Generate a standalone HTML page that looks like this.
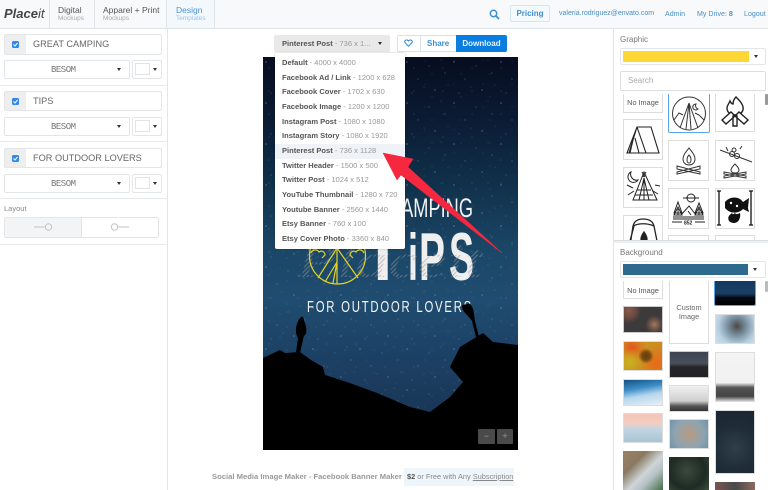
<!DOCTYPE html>
<html><head><meta charset="utf-8"><style>
*{box-sizing:border-box}
html,body{margin:0;padding:0;width:768px;height:490px;overflow:hidden;background:#fff;font-family:"Liberation Sans",sans-serif}
#r{position:relative;width:768px;height:490px;overflow:hidden;filter:blur(.35px)}
.a{position:absolute}
.t{position:absolute;white-space:nowrap}
.thumb{position:absolute;border:1px solid #ddd;background:#fff}
.opt{position:absolute;left:0;width:130px;height:14.65px;line-height:14.65px;padding-left:7px;font-size:7.55px;color:#999;white-space:nowrap}
.opt b{color:#555}
.box{position:absolute;border:1px solid #e3e6e8;border-radius:2px;background:#fff}
.font{font-family:"Liberation Mono",monospace;font-size:9px;color:#777;letter-spacing:-.5px}
.car{position:absolute;width:0;height:0;border-left:2.5px solid transparent;border-right:2.5px solid transparent;border-top:3px solid #333}
svg{display:block}
.ck{position:absolute;left:12px;width:7px;height:7px;background:#2f8ae8;border-radius:1.5px}
</style></head><body><div id="r">

<!-- header -->
<div class="a" style="left:0;top:0;width:768px;height:29px;background:#f7f9fa;border-bottom:1px solid #dfe4e8"></div>
<div class="a" style="left:167px;top:0;width:47px;height:28px;background:#f3f8fc"></div>
<div class="a" style="left:49px;top:0;width:1px;height:28px;background:#e1e5e8"></div>
<div class="a" style="left:94px;top:0;width:1px;height:28px;background:#e1e5e8"></div>
<div class="a" style="left:166px;top:0;width:1px;height:28px;background:#e1e5e8"></div>
<div class="a" style="left:214px;top:0;width:1px;height:28px;background:#e1e5e8"></div>
<div class="t" style="left:4px;top:6px;font-size:13px;line-height:16px;font-style:italic;color:#444"><b>Place</b><span style="font-weight:400">it</span></div>
<div class="t" style="left:58px;top:5px;font-size:8.5px;line-height:11px;color:#555">Digital</div>
<div class="t" style="left:58px;top:15px;font-size:6.5px;line-height:8px;color:#aaa">Mockups</div>
<div class="t" style="left:103px;top:5px;font-size:8.5px;line-height:11px;color:#555">Apparel + Print</div>
<div class="t" style="left:103px;top:15px;font-size:6.5px;line-height:8px;color:#aaa">Mockups</div>
<div class="t" style="left:176px;top:5px;font-size:8.5px;line-height:11px;color:#4a90d9">Design</div>
<div class="t" style="left:176px;top:15px;font-size:6.5px;line-height:8px;color:#9cc4e8">Templates</div>
<svg class="a" style="left:489px;top:9px" width="11" height="11" viewBox="0 0 11 11"><circle cx="4.500" cy="4.500" r="3.200" fill="none" stroke="#3d8fd0" stroke-width="1.500"/><path d="M7 7l3 3" stroke="#3d8fd0" stroke-width="1.700"/></svg>
<div class="a" style="left:510px;top:5px;width:40px;height:17px;border:1px solid #d5e6f3;border-radius:2px;background:#f4f9fc;text-align:center;font-size:8px;line-height:15px;font-weight:bold;color:#3f8fd2">Pricing</div>
<div class="t" style="left:559px;top:9px;font-size:7px;line-height:10px;color:#4a8fc7">valeria.rodriguez@envato.com</div>
<div class="t" style="left:665px;top:9px;font-size:7.100px;line-height:10px;color:#4a8fc7">Admin</div>
<div class="t" style="left:697px;top:9px;font-size:7.100px;line-height:10px;color:#4a8fc7">My Drive: <b>8</b></div>
<div class="t" style="left:744px;top:9px;font-size:7.100px;line-height:10px;color:#4a8fc7">Logout</div>

<!-- left panel -->
<div class="a" style="left:167px;top:29px;width:1px;height:461px;background:#e3e6e8"></div>
<div class="a" style="left:0;top:85px;width:167px;height:1px;background:#e6e8ea"></div>
<div class="a" style="left:0;top:141px;width:167px;height:1px;background:#e6e8ea"></div>
<div class="a" style="left:0;top:198px;width:167px;height:1px;background:#e6e8ea"></div>
<div class="a" style="left:0;top:244px;width:167px;height:1px;background:#e6e8ea"></div>

<div class="box" style="left:4px;top:34px;width:158px;height:21px"></div>
<div class="a" style="left:5px;top:35px;width:21px;height:19px;background:#eeeeee"></div>
<div class="ck" style="top:41px"><svg width="7" height="7"><path d="M1.500 3.500l1.500 1.500 2.500-3" fill="none" stroke="#fff" stroke-width="1"/></svg></div>
<div class="t" style="left:33px;top:38px;font-size:9.200px;line-height:12px;color:#666">GREAT CAMPING</div>
<div class="box" style="left:4px;top:60px;width:126px;height:19px"></div>
<div class="t font" style="left:51px;top:65px;line-height:10px">BESOM</div>
<div class="car" style="left:117px;top:68px"></div>
<div class="box" style="left:132px;top:60px;width:30px;height:19px"></div>
<div class="a" style="left:135px;top:63px;width:15px;height:12px;border:1px solid #e3e3e3"></div>
<div class="car" style="left:153px;top:68px"></div>

<div class="box" style="left:4px;top:91px;width:158px;height:20px"></div>
<div class="a" style="left:5px;top:92px;width:21px;height:18px;background:#eeeeee"></div>
<div class="ck" style="top:98px"><svg width="7" height="7"><path d="M1.500 3.500l1.500 1.500 2.500-3" fill="none" stroke="#fff" stroke-width="1"/></svg></div>
<div class="t" style="left:33px;top:95px;font-size:9.200px;line-height:12px;color:#666">TIPS</div>
<div class="box" style="left:4px;top:117px;width:126px;height:19px"></div>
<div class="t font" style="left:51px;top:122px;line-height:10px">BESOM</div>
<div class="car" style="left:117px;top:125px"></div>
<div class="box" style="left:132px;top:117px;width:30px;height:19px"></div>
<div class="a" style="left:135px;top:120px;width:15px;height:12px;border:1px solid #e3e3e3"></div>
<div class="car" style="left:153px;top:125px"></div>

<div class="box" style="left:4px;top:148px;width:158px;height:20px"></div>
<div class="a" style="left:5px;top:149px;width:21px;height:18px;background:#eeeeee"></div>
<div class="ck" style="top:155px"><svg width="7" height="7"><path d="M1.500 3.500l1.500 1.500 2.500-3" fill="none" stroke="#fff" stroke-width="1"/></svg></div>
<div class="t" style="left:33px;top:152px;font-size:9.200px;line-height:12px;color:#666">FOR OUTDOOR LOVERS</div>
<div class="box" style="left:4px;top:174px;width:126px;height:19px"></div>
<div class="t font" style="left:51px;top:179px;line-height:10px">BESOM</div>
<div class="car" style="left:117px;top:182px"></div>
<div class="box" style="left:132px;top:174px;width:30px;height:19px"></div>
<div class="a" style="left:135px;top:177px;width:15px;height:12px;border:1px solid #e3e3e3"></div>
<div class="car" style="left:153px;top:182px"></div>

<div class="t" style="left:4px;top:204px;font-size:7.500px;line-height:10px;color:#888">Layout</div>
<div class="box" style="left:4px;top:217px;width:155px;height:21px"></div>
<div class="a" style="left:5px;top:218px;width:77px;height:19px;background:#f2f4f5;border-right:1px solid #e3e6e8"></div>
<svg class="a" style="left:33px;top:222px" width="20" height="10"><path d="M1 5h11" stroke="#c5c5c5"/><circle cx="15.500" cy="5" r="3.200" fill="none" stroke="#c5c5c5"/></svg>
<svg class="a" style="left:110px;top:222px" width="20" height="10"><path d="M8 5h11" stroke="#c5c5c5"/><circle cx="4.500" cy="5" r="3.200" fill="none" stroke="#c5c5c5"/></svg>

<!-- toolbar -->
<div class="a" style="left:274px;top:35px;width:116px;height:17px;background:#e9e9e9;border-radius:2px"></div>
<div class="t" style="left:282px;top:38px;font-size:7.550px;line-height:11px;color:#999"><b style="color:#555">Pinterest Post</b> - 736 x 1...</div>
<div class="car" style="left:378px;top:42px"></div>
<div class="a" style="left:397px;top:35px;width:60px;height:17px;border:1px solid #d5e4f0;background:#fff;border-radius:2px 0 0 2px"></div>
<div class="a" style="left:420px;top:35px;width:1px;height:17px;background:#d5e4f0"></div>
<svg class="a" style="left:404px;top:39px" width="9" height="8" viewBox="0 0 9 8"><path d="M4.500 7.200L1 3.600C-.2 1.800 2.800-.4 4.500 2 6.200-.4 9.200 1.800 8 3.600z" fill="none" stroke="#3d8fd0" stroke-width="1.100"/></svg>
<div class="t" style="left:427px;top:38px;font-size:8px;line-height:11px;font-weight:bold;color:#3f8fd2">Share</div>
<div class="a" style="left:456px;top:35px;width:51px;height:17px;background:#0a7de0;border-radius:0 2px 2px 0;text-align:center;font-size:8px;line-height:17px;font-weight:bold;color:#e8f3fd">Download</div>

<!-- poster -->
<div class="a" style="left:263px;top:57px;width:255px;height:393px;overflow:hidden;background:linear-gradient(180deg,#070d20 0%,#0b1a33 15%,#10304a 32%,#1b4868 50%,#1f4c70 62%,#1d4468 72%,#182f4e 100%)">
<svg width="255" height="393" viewBox="0 0 255 393" style="position:absolute;left:0;top:0">
<defs>
<pattern id="st" width="47" height="41" patternUnits="userSpaceOnUse">
<circle cx="3" cy="5" r=".5" fill="#cfd8ff" opacity=".8"/><circle cx="14" cy="22" r=".4" fill="#fff" opacity=".7"/><circle cx="25" cy="9" r=".4" fill="#b9c6ff" opacity=".8"/><circle cx="31" cy="33" r=".5" fill="#fff" opacity=".6"/><circle cx="41" cy="16" r=".4" fill="#dfe6ff" opacity=".8"/><circle cx="8" cy="36" r=".4" fill="#a9b8f0" opacity=".8"/><circle cx="20" cy="30" r=".3" fill="#fff" opacity=".7"/><circle cx="37" cy="3" r=".3" fill="#fff" opacity=".7"/><circle cx="44" cy="28" r=".3" fill="#cfd8ff" opacity=".8"/>
</pattern>
<pattern id="st2" width="29" height="23" patternUnits="userSpaceOnUse">
<circle cx="6" cy="11" r=".35" fill="#c8d4ff" opacity=".6"/><circle cx="17" cy="4" r=".3" fill="#fff" opacity=".5"/><circle cx="24" cy="17" r=".35" fill="#aebcf2" opacity=".6"/>
</pattern>
<pattern id="ht" width="3" height="3" patternUnits="userSpaceOnUse" patternTransform="rotate(45)"><rect width="1.200" height="3" fill="#9a9a9a" opacity=".5"/></pattern>
</defs>
<rect width="255" height="393" fill="url(#st)"/>
<rect width="255" height="393" fill="url(#st2)"/>
<text x="125" y="160" font-family="Liberation Sans,sans-serif" font-size="27" fill="#f2f2f2" textLength="85" lengthAdjust="spacingAndGlyphs">CAMPING</text>
<g font-family="Liberation Sans,sans-serif" font-size="68" font-weight="bold" fill="#efefef">
<text x="99" y="223">T</text>
<text x="145" y="223" font-size="66" textLength="10" lengthAdjust="spacingAndGlyphs">i</text>
<text x="156" y="223" textLength="26" lengthAdjust="spacingAndGlyphs">P</text>
<text x="186" y="223" textLength="25" lengthAdjust="spacingAndGlyphs">S</text>
</g>
<text x="34" y="220" font-family="Liberation Serif,serif" font-size="48" font-style="italic" fill="url(#ht)" textLength="186" lengthAdjust="spacingAndGlyphs">Placeit</text>
<text x="44" y="255" font-family="Liberation Sans,sans-serif" font-size="16" letter-spacing="2.500" fill="#f5f5f5" textLength="166" lengthAdjust="spacingAndGlyphs">FOR OUTDOOR LOVERS</text>
<g fill="none" stroke="#e8d21f" stroke-width="1.200">
<circle cx="74.500" cy="199" r="28"/>
<path d="M74 191v36M74 191L55 221M74 191L95 221M74 205L62 225M74 205L70 226M48 196c2-4 6-4 8-1 3-2 6 0 6 3l-3 3M101 196c-2-4-6-4-8-1-3-2-6 0-6 3l3 3"/>
</g>
<!-- silhouette -->
<path d="M0 301L17 293 22 296 37 295 48 303 60 310 62 318 84 325 114 336 147 350 167 355 187 340 200 325 187 310 197 290 220 276 230 285 255 288V393H0z" fill="#000"/>
<path d="M33 295l2-14c-2-3-3-9-1-14 1-4 3-6 4-7 2-1 3 1 3 4 2 3 3 9 2 13-2 1-3 4-3 6l-3 13z" fill="#000"/>
<path d="M213 280l-4-16-4-5c-3-3-6-6-6-10 1-2 3-1 5-2 3-1 5 2 6 5 1 3 1 7 2 12l4 16z" fill="#000"/>
</svg>
<div class="a" style="left:215px;top:372px;width:17px;height:15px;background:#4a4a4a;border-radius:1px;text-align:center;color:#999;font-size:9px;line-height:15px">−</div>
<div class="a" style="left:234px;top:372px;width:16px;height:15px;background:#4a4a4a;border-radius:1px;text-align:center;color:#999;font-size:9px;line-height:15px">+</div>
</div>

<!-- dropdown -->
<div class="a" style="left:275px;top:53px;width:130px;height:196px;background:#fff;border-radius:2px;box-shadow:0 0 2px rgba(0,0,0,.25)">
<div class="a" style="left:0;top:91px;width:130px;height:14.500px;background:#eff3f7"></div>
<div class="opt" style="top:3px"><b>Default</b> - 4000 x 4000</div>
<div class="opt" style="top:17.700px"><b>Facebook Ad / Link</b> - 1200 x 628</div>
<div class="opt" style="top:32.300px"><b>Facebook Cover</b> - 1702 x 630</div>
<div class="opt" style="top:47px"><b>Facebook Image</b> - 1200 x 1200</div>
<div class="opt" style="top:61.600px"><b>Instagram Post</b> - 1080 x 1080</div>
<div class="opt" style="top:76.300px"><b>Instagram Story</b> - 1080 x 1920</div>
<div class="opt" style="top:90.900px"><b>Pinterest Post</b> - 736 x 1128</div>
<div class="opt" style="top:105.600px"><b>Twitter Header</b> - 1500 x 500</div>
<div class="opt" style="top:120.200px"><b>Twitter Post</b> - 1024 x 512</div>
<div class="opt" style="top:134.900px"><b>YouTube Thumbnail</b> - 1280 x 720</div>
<div class="opt" style="top:149.500px"><b>Youtube Banner</b> - 2560 x 1440</div>
<div class="opt" style="top:164.200px"><b>Etsy Banner</b> - 760 x 100</div>
<div class="opt" style="top:178.800px"><b>Etsy Cover Photo</b> - 3360 x 840</div>
</div>

<!-- arrow -->
<svg class="a" style="left:370px;top:145px" width="140" height="115"><path d="M13 8L43 14 38 22 132 108 31 30 27 35z" fill="#f5283f" stroke="#f5283f" stroke-width=".5" stroke-linejoin="round"/></svg>

<!-- bottom -->
<div class="t" style="left:212px;top:472px;font-size:7.650px;line-height:10px;font-weight:bold;color:#999">Social Media Image Maker - Facebook Banner Maker</div>
<div class="a" style="left:404px;top:468px;width:110px;height:18px;background:#eef6fc"></div>
<div class="t" style="left:407px;top:472px;font-size:7.400px;line-height:10px;color:#888"><b style="color:#555">$2</b> or Free with Any <u>Subscription</u></div>

<!-- right panel -->
<div class="a" style="left:613px;top:29px;width:1px;height:461px;background:#e3e6e8"></div>
<div class="a" style="left:614px;top:240px;width:154px;height:3px;background:#eceeef;border-top:1px solid #dcdfe1"></div>
<div class="t" style="left:620px;top:35px;font-size:8px;line-height:10px;color:#777">Graphic</div>
<div class="box" style="left:620px;top:48px;width:146px;height:17px"></div>
<div class="a" style="left:623px;top:51px;width:126px;height:11px;background:#fdd835"></div>
<div class="car" style="left:754px;top:55px"></div>
<div class="box" style="left:620px;top:71px;width:146px;height:20px;border-color:#dcdfe1"></div>
<div class="t" style="left:628px;top:76px;font-size:8px;line-height:10px;color:#aaa">Search</div>
<div class="a" style="left:765px;top:94px;width:3px;height:11px;background:#999;border-radius:1px"></div>

<!-- graphic grid -->
<div class="a" style="left:614px;top:94px;width:150px;height:146px;overflow:hidden">
<div class="thumb" style="left:9px;top:-6px;width:40px;height:25px;text-align:center;font-size:7.300px;line-height:28px;color:#555">No Image</div>
<div class="thumb" style="left:54px;top:-6px;width:42px;height:45px;border:1px solid #5aa5e6;border-radius:0 0 2px 2px"><svg width="40" height="43" viewBox="0 0 40 43" fill="none" stroke="#333" stroke-width="1"><circle cx="20" cy="24.500" r="16.500"/><path d="M20 14L11 39M20 14l9 25M20 14l-3 26M20 14l2 26M5 31l5-7 4 2M35 31l-5-5-4-2"/><path d="M27 15a3 3 0 1 0 2 5 3.400 3.400 0 0 1-2-5z"/></svg></div>
<div class="thumb" style="left:101px;top:-6px;width:40px;height:44px"><svg width="38" height="42" viewBox="0 0 38 42" fill="none" stroke="#222" stroke-width="1.400"><path d="M20 8c4 4 8 8 7 13-1 3-3 5-8 5s-8-3-8-7c0-3 2-4 3-7 1 2 2 3 3 3 0-3 1-5 3-7z"/><path d="M6 31l9-8 4 4-9 8zM32 31l-9-8-4 4 9 8zM17 27h4v10h-4z" fill="#fff"/></svg></div>

<div class="thumb" style="left:9px;top:25px;width:40px;height:41px"><svg width="38" height="39" viewBox="0 0 38 39" fill="none" stroke="#222" stroke-width="1.100"><path d="M13 7h14l8 26H3zM13 7l-8 26M13 7l9 26M9 20l-3 13M11 18l4 15M3 33h32"/></svg></div>
<div class="thumb" style="left:54px;top:46px;width:41px;height:41px"><svg width="39" height="39" viewBox="0 0 39 39" fill="none" stroke="#333" stroke-width="1"><path d="M20 7c3 4 6 7 6 11 0 4-3 6-6 6s-6-2-6-6c0-4 3-7 6-11zM20 14c2 2 2 4 2 5 0 2-1 3-2 3s-2-1-2-3c0-1 0-3 2-5z"/><path d="M8 25l23 6v2L8 28zM31 25L8 31v2l23-5z"/></svg></div>
<div class="thumb" style="left:101px;top:46px;width:40px;height:41px"><svg width="38" height="39" viewBox="0 0 38 39" fill="none" stroke="#333" stroke-width="1"><path d="M4 9l32 12"/><circle cx="16" cy="13" r="2.500"/><circle cx="21" cy="15" r="2.500"/><circle cx="18" cy="9" r="2"/><path d="M10 6l2 4M24 8l2-3M19 23c2 2 4 4 4 6 0 2-2 3-4 3s-4-1-4-3c0-2 2-4 4-6zM8 31l22 4v2L8 33zM30 31L8 35v2l22-4z"/></svg></div>

<div class="thumb" style="left:9px;top:73px;width:40px;height:41px"><svg width="38" height="39" viewBox="0 0 38 39" fill="none" stroke="#222" stroke-width="1"><path d="M7 4a5.500 5.500 0 1 0 7 8 6 6 0 0 1-7-8z"/><path d="M20 4l-11 28h24zM18 4l3 5M22 4l-3 5M20 10v22M15 32l5-22 5 22M13 22h14M11 27h18M3 17l6 3M31 17l5 1M4 27l6-4M29 23l5 3"/></svg></div>
<div class="thumb" style="left:54px;top:94px;width:41px;height:41px"><svg width="39" height="39" viewBox="0 0 39 39" fill="none" stroke="#222" stroke-width="1"><circle cx="22" cy="9" r="4"/><path d="M14 9h16M9 13l-4 11h8zM9 18l-4 8h8zM9 20v6M30 14l-4 10h8zM30 18l-4 8h8zM30 20v6M12 26l8-9 7 9M19 22l3 4M4 28h31M4 30h31M3 33h10M26 33h10"/><text x="15" y="35.500" font-size="5" font-family="Liberation Sans" font-weight="bold" stroke="none" fill="#222">852</text></svg></div>
<div class="thumb" style="left:101px;top:94px;width:40px;height:41px"><svg width="38" height="39" viewBox="0 0 38 39"><path d="M3 2v34M35 2v34M1 2h4M33 2h4M1 36h4M33 36h4" stroke="#111" stroke-width="1.300" fill="none"/><path d="M9 13c5-6 14-6 18 0l6-4-1 10 1 4-6-3c-5 5-13 5-18-1z" fill="#111"/><circle cx="15" cy="14" r="1.200" fill="#fff"/><circle cx="21" cy="17" r="1.200" fill="#fff"/><path d="M13 32c-2-5 1-6 3-8 1 2 2 1 3 0 1 2 3 1 5 0 1 4-1 10-6 10-2 0-4-1-5-2z" fill="#111"/></svg></div>

<div class="thumb" style="left:9px;top:121px;width:40px;height:41px"><svg width="38" height="39" viewBox="0 0 38 39" fill="none" stroke="#222" stroke-width="1.300"><path d="M19 3c7 0 10 3 11 7l4 20H6l3-20c1-4 4-7 10-7zM9 10c6-3 14-3 21 0M10 10L6 25"/><path d="M20 16c2 3 3 5 3 7 0 2-1 3-3 3s-3-1-3-3c0-2 1-4 3-7z" fill="#222"/></svg></div>
<div class="thumb" style="left:54px;top:141px;width:41px;height:41px"><svg width="39" height="39"><path d="M16 6h6v3h-6z" fill="#222"/></svg></div>
<div class="thumb" style="left:101px;top:141px;width:40px;height:41px"><svg width="38" height="39"><path d="M9 6h9v4H9z" fill="#222"/></svg></div>
</div>

<!-- background section -->
<div class="t" style="left:620px;top:248px;font-size:8px;line-height:10px;color:#777">Background</div>
<div class="box" style="left:620px;top:261px;width:146px;height:17px"></div>
<div class="a" style="left:623px;top:264px;width:125px;height:11px;background:#2d6a8e"></div>
<div class="car" style="left:753px;top:268px"></div>
<div class="a" style="left:765px;top:281px;width:3px;height:11px;background:#bbb;border-radius:1px"></div>

<div class="a" style="left:614px;top:281px;width:150px;height:209px;overflow:hidden">
<div class="thumb" style="left:9px;top:-6px;width:40px;height:24px;text-align:center;font-size:7.300px;line-height:29px;color:#555">No Image</div>
<div class="a" style="left:9px;top:25px;width:40px;height:27px;background:radial-gradient(circle at 80% 70%,#a5785a 0,#6b5348 14%,transparent 26%),radial-gradient(circle at 12% 15%,#8a5a48 0,#6a4a40 18%,transparent 32%),#3c3a3a;border:1px solid #ccc"></div>
<div class="a" style="left:9px;top:60px;width:40px;height:30px;border:1px solid #ddd;background:radial-gradient(circle at 58% 50%,#6a3a10 0,#7a4a10 16%,transparent 30%),radial-gradient(circle at 15% 70%,#c9b020 0,transparent 35%),radial-gradient(circle at 85% 75%,#e86a18 0,transparent 40%),radial-gradient(circle at 20% 20%,#e5551f 0,transparent 40%),linear-gradient(110deg,#c8a020,#d08020)"></div>
<div class="a" style="left:9px;top:98px;width:40px;height:27px;border:1px solid #ddd;background:linear-gradient(170deg,#14507f 0,#3f8fc9 35%,#b6d6ec 60%,#e8f0f6 100%)"></div>
<div class="a" style="left:9px;top:132px;width:40px;height:30px;border:1px solid #ddd;background:linear-gradient(180deg,#f3c6b8 0,#f3cdc0 35%,#c5d6e2 50%,#a9c4d8 100%)"></div>
<div class="a" style="left:9px;top:170px;width:40px;height:40px;background:linear-gradient(135deg,#9b8066 0,#8a7a62 30%,#cfd6d8 55%,#b3c0c4 70%,#3c6a3c 100%)"></div>

<div class="thumb" style="left:55px;top:-6px;width:40px;height:69px;text-align:center;font-size:7.300px;line-height:9px;color:#666;padding-top:27px">Custom<br>Image</div>
<div class="a" style="left:55px;top:70px;width:40px;height:27px;border:1px solid #ccc;background:linear-gradient(180deg,#3c4250 0,#4a4f5c 45%,#262628 60%,#232325 100%)"></div>
<div class="a" style="left:55px;top:104px;width:40px;height:27px;border:1px solid #ddd;background:linear-gradient(180deg,#f0f0f0 0,#cfcfcf 60%,#555 80%,#333 100%)"></div>
<div class="a" style="left:55px;top:138px;width:40px;height:30px;border:1px solid #ddd;background:radial-gradient(circle at 50% 50%,#b89a80 0,#8fa4b0 60%,#6f93a8 100%)"></div>
<div class="a" style="left:55px;top:176px;width:40px;height:34px;background:radial-gradient(circle at 45% 40%,#3a4a3f 0,#2c3a30 30%,#1e2a26 60%,#40503c 100%)"></div>

<div class="a" style="left:100px;top:-6px;width:42px;height:31px;border:1px solid #5aa5e6;border-radius:0 0 2px 2px;background:linear-gradient(180deg,#14365a 0,#1a3f66 60%,#050a10 75%,#000 100%)"></div>
<div class="a" style="left:101px;top:33px;width:40px;height:30px;border:1px solid #ddd;background:radial-gradient(circle at 55% 40%,#4a4a4a 0,#79909f 35%,#b9d0e2 70%,#cfe0ee 100%)"></div>
<div class="a" style="left:101px;top:71px;width:40px;height:50px;border:1px solid #ddd;background:linear-gradient(180deg,#f4f4f4 0,#f1f1f1 62%,#555 72%,#444 90%,#ccc 100%)"></div>
<div class="a" style="left:101px;top:129px;width:40px;height:64px;border:1px solid #ddd;background:radial-gradient(circle at 50% 60%,#2f3f4a 0,#1f2d38 50%,#1a2631 100%)"></div>
<div class="a" style="left:101px;top:201px;width:40px;height:9px;background:linear-gradient(90deg,#7a5550,#4a4a4a,#8a6a60)"></div>
</div>

</div></body></html>
